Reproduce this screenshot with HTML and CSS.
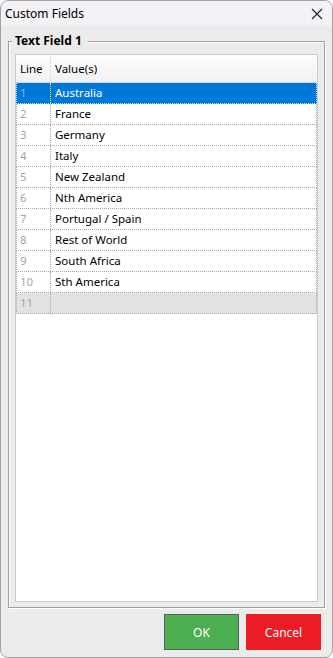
FILE: index.html
```html
<!DOCTYPE html>
<html lang="en">
<head>
  <meta charset="UTF-8" />
  <meta name="viewport" content="width=device-width, initial-scale=1" />
  <title>Custom Fields</title>
  <link rel="stylesheet" href="styles.css">
</head>
<body>

  <div class="window">
    <div class="titlebar">
      <span class="title">Custom Fields</span>
      <svg class="close" width="12" height="12" viewBox="0 0 12 12">
        <path d="M1 1 L11 11 M11 1 L1 11" stroke="#1f1f1f" stroke-width="1.1" fill="none" />
      </svg>
    </div>

    <div class="content">
      <fieldset class="group">
        <legend>Text Field 1</legend>

        <div class="grid">
          <div class="grid-head">
            <div class="col-line">Line</div>
            <div class="col-value">Value(s)</div>
          </div>

          <div class="row selected"><div class="col-line">1</div><div class="col-value">Australia</div></div>
          <div class="row"><div class="col-line">2</div><div class="col-value">France</div></div>
          <div class="row"><div class="col-line">3</div><div class="col-value">Germany</div></div>
          <div class="row"><div class="col-line">4</div><div class="col-value">Italy</div></div>
          <div class="row"><div class="col-line">5</div><div class="col-value">New Zealand</div></div>
          <div class="row"><div class="col-line">6</div><div class="col-value">Nth America</div></div>
          <div class="row"><div class="col-line">7</div><div class="col-value">Portugal / Spain</div></div>
          <div class="row"><div class="col-line">8</div><div class="col-value">Rest of World</div></div>
          <div class="row"><div class="col-line">9</div><div class="col-value">South Africa</div></div>
          <div class="row"><div class="col-line">10</div><div class="col-value">Sth America</div></div>
          <div class="row new-row"><div class="col-line">11</div><div class="col-value"></div></div>
        </div>
      </fieldset>

      <div class="buttons">
        <button class="btn btn-ok">OK</button>
        <button class="btn btn-cancel">Cancel</button>
      </div>
    </div>
  </div>

</body>
</html>
```

FILE: styles.css
```css
html, body {
  margin: 0;
  padding: 0;
  background: #fff;
  font-family: 'Noto Sans', 'Open Sans', sans-serif;
  font-size: 11.5px;
  color: #000;
}

.window {
  box-sizing: border-box;
  width: 333px;
  height: 658px;
  border: 1px solid #a3a3a3;
  border-radius: 8px;
  overflow: hidden;
  background: #ebebeb;
  display: flex;
  flex-direction: column;
}

.titlebar {
  height: 25px;
  background: #f3f1f6;
  display: flex;
  align-items: center;
  justify-content: space-between;
  padding: 0 9px 0 4px;
}

.title {
  font-size: 12px;
}

.close {
  display: block;
}

.content {
  flex: 1;
  display: flex;
  flex-direction: column;
  padding: 7px 7px 7px 7px;
  min-height: 0;
}

/* group box with etched border */
.group {
  flex: 1;
  min-height: 0;
  margin: 0;
  padding: 5px 6px 5px 6px;
  border: 1px solid #a0a0a0;
  box-shadow: 1px 1px 0 #fff, inset 1px 1px 0 #fff;
  display: flex;
  flex-direction: column;
}

.group legend {
  font-weight: bold;
  font-size: 12px;
  line-height: 16px;
  padding: 0 6px 0 3px;
  margin-left: -3px;
  background: #ebebeb;
}

.grid {
  flex: 1;
  background: #fff;
  border: 1px solid #c6cdd5;
}

.grid-head {
  display: flex;
  height: 27px;
  line-height: 27px;
  background: linear-gradient(#fdfdfd, #f1f1f1);
  border-bottom: 1px solid #d6d6d6;
}

.grid-head .col-line {
  border-right: 1px solid #e2e2e2;
  color: #000;
}

.row {
  display: flex;
  height: 20px;
  line-height: 20px;
  border: 1px dotted #a8a8a8;
  border-top: none;
}

.col-line {
  box-sizing: border-box;
  width: 34px;
  padding-left: 3px;
  color: #a6a6a6;
  border-right: 1px dotted #a8a8a8;
}

.col-value {
  flex: 1;
  padding-left: 4px;
}

.grid-head .col-line {
  width: 35px;
  padding-left: 4px;
}

.selected {
  background: #0078d7;
  color: #fff;
  border-color: #cfe3f5;
}

.selected .col-line {
  color: #7fb5e6;
  border-right-color: #cfe3f5;
}

.new-row {
  background: #e3e3e3;
}

.buttons {
  display: flex;
  justify-content: flex-end;
  gap: 7px;
  margin-top: 6px;
  padding-right: 4px;
}

.btn {
  width: 75px;
  height: 36px;
  border: none;
  color: #fff;
  font-family: inherit;
  font-size: 12px;
  padding: 0;
}

.btn-ok {
  background: #4caf50;
  border: 1px solid #5a5a5a;
}

.btn-cancel {
  background: #ed1c24;
}
```
